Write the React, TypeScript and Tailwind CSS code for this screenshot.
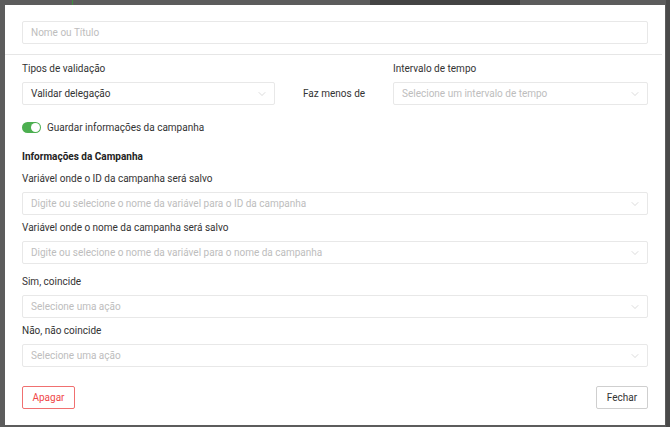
import { ChevronDown } from "lucide-react";

const roboto = { fontFamily: "Roboto, 'Liberation Sans', sans-serif" };

function Select({ text, placeholder = true }: { text: string; placeholder?: boolean }) {
  return (
    <div className="flex h-[23px] items-center justify-between rounded-[2px] border border-[#e8e8e8] bg-white pl-2 pr-[6px]">
      <span className={"text-[10px] " + (placeholder ? "text-[#bdbdbd]" : "text-[#333]")}>{text}</span>
      <ChevronDown className="h-[12px] w-[12px] text-[#c8c8c8]" strokeWidth={1.3} />
    </div>
  );
}

export default function App() {
  return (
    <div className="relative h-[427px] w-[670px] overflow-hidden bg-[#5c5c5c]">
      {/* dimmed page behind the modal */}
      <div className="absolute left-[72px] top-0 h-[5px] w-[1px] bg-[#3f8f3f]" />
      <div className="absolute left-[370px] top-0 h-[5px] w-[150px] bg-[#444]" />
      <div className="absolute right-0 top-0 h-full w-[4px] bg-[#4a4a4a]" />

      <div className="absolute left-[5px] top-[5px] h-[420px] w-[660px] bg-white" style={roboto}>
        <div className="px-[17px] pt-[16px]">
          <div className="flex h-[23px] items-center rounded-[2px] border border-[#e8e8e8] pl-2">
            <span className="text-[10px] text-[#bdbdbd]">Nome ou Título</span>
          </div>
        </div>
        <div className="mt-[10px] mr-[3px] h-[1px] bg-[#e6e6e6]" />

        <div className="px-[17px] pt-[6px]">
          <div className="flex items-end">
            <div className="w-[253px]">
              <div className="mb-[6px] text-[10px] leading-[15px] text-[#333]">Tipos de validação</div>
              <Select text="Validar delegação" placeholder={false} />
            </div>
            <div className="flex h-[23px] w-[118px] items-center pl-[28px] text-[10px] text-[#333]">Faz menos de</div>
            <div className="flex-1">
              <div className="mb-[6px] text-[10px] leading-[15px] text-[#333]">Intervalo de tempo</div>
              <Select text="Selecione um intervalo de tempo" />
            </div>
          </div>

          <div className="mt-[15px] flex h-[15px] items-center gap-[6px]">
            <div className="relative h-[11px] w-[19px] rounded-full bg-[#4caf50]">
              <div className="absolute right-[1px] top-[1px] h-[9px] w-[9px] rounded-full bg-white" />
            </div>
            <span className="text-[10px] text-[#333]">Guardar informações da campanha</span>
          </div>

          <div className="mt-[14px] text-[10px] font-bold leading-[15px] text-[#222]">Informações da Campanha</div>

          <div className="mt-[7px] text-[10px] leading-[15px] text-[#333]">Variável onde o ID da campanha será salvo</div>
          <div className="mt-[6px]">
            <Select text="Digite ou selecione o nome da variável para o ID da campanha" />
          </div>

          <div className="mt-[5px] text-[10px] leading-[15px] text-[#333]">Variável onde o nome da campanha será salvo</div>
          <div className="mt-[6px]">
            <Select text="Digite ou selecione o nome da variável para o nome da campanha" />
          </div>

          <div className="mt-[10px] text-[10px] leading-[15px] text-[#333]">Sim, coincide</div>
          <div className="mt-[6px]">
            <Select text="Selecione uma ação" />
          </div>

          <div className="mt-[5px] text-[10px] leading-[15px] text-[#333]">Não, não coincide</div>
          <div className="mt-[6px]">
            <Select text="Selecione uma ação" />
          </div>

          <div className="mt-[19px] flex justify-between">
            <button className="h-[23px] w-[53px] rounded-[2px] border border-[#f07070] text-[10px] text-[#f04848]">
              Apagar
            </button>
            <button className="h-[23px] w-[52px] rounded-[2px] border border-[#cfcfcf] text-[10px] text-[#333]">
              Fechar
            </button>
          </div>
        </div>
      </div>
    </div>
  );
}
